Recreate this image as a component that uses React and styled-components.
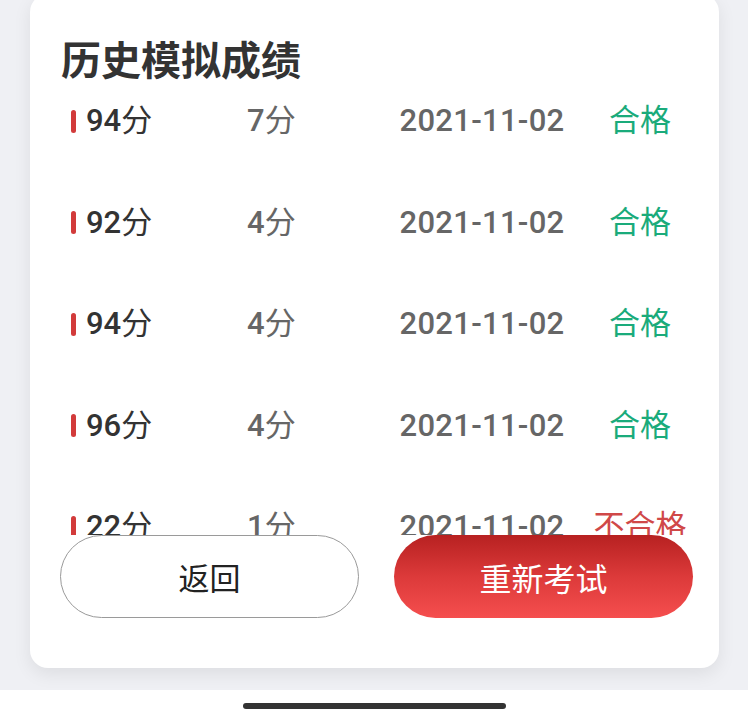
import React from 'react';
import styled, { createGlobalStyle } from 'styled-components';

const GlobalStyle = createGlobalStyle`
  html, body {
    margin: 0;
    padding: 0;
    background: #fff;
  }
  body {
    font-family: Roboto, "Noto Sans CJK SC", sans-serif;
  }
`;

const records = [
  { score: 94, used: 7, date: '2021-11-02', passed: true },
  { score: 92, used: 4, date: '2021-11-02', passed: true },
  { score: 94, used: 4, date: '2021-11-02', passed: true },
  { score: 96, used: 4, date: '2021-11-02', passed: true },
  { score: 22, used: 1, date: '2021-11-02', passed: false },
];

function App() {
  return (
    <>
      <GlobalStyle />
      <Screen>
        <Backdrop>
          <Card>
            <Title>历史模拟成绩</Title>
            <List>
              {records.map((r, i) => (
                <Row key={i}>
                  <ScoreCell>
                    <Marker />
                    <Score><Num>{r.score}</Num>分</Score>
                  </ScoreCell>
                  <Used><Num>{r.used}</Num>分</Used>
                  <DateCell>{r.date}</DateCell>
                  <Status $passed={r.passed}>{r.passed ? '合格' : '不合格'}</Status>
                </Row>
              ))}
            </List>
            <Actions>
              <BackButton>返回</BackButton>
              <RetryButton>重新考试</RetryButton>
            </Actions>
          </Card>
        </Backdrop>
        <HomeBar>
          <Indicator />
        </HomeBar>
      </Screen>
    </>
  );
}

export default App;

const Screen = styled.div`
  width: 748px;
  height: 720px;
  overflow: hidden;
  display: flex;
  flex-direction: column;
`;

const Backdrop = styled.div`
  height: 690px;
  background: #eff0f4;
  padding: 0 29px 0 30px;
  box-sizing: border-box;
`;

const Card = styled.div`
  margin-top: -6px;
  height: 674px;
  box-sizing: border-box;
  background: #fff;
  border-radius: 18px;
  box-shadow: 0 6px 18px rgba(0, 0, 0, 0.08);
  padding: 40px 0 0;
  display: flex;
  flex-direction: column;
`;

const Title = styled.h2`
  margin: 0 0 0 31px;
  font-family: "Noto Sans CJK SC", sans-serif;
  font-size: 40px;
  font-weight: 700;
  line-height: 48px;
  color: #333;
`;

const List = styled.div`
  margin-top: 17px;
  height: 436px;
  overflow: hidden;
  display: flex;
  flex-direction: column;
  gap: 57.5px;
`;

const Row = styled.div`
  flex: none;
  display: grid;
  grid-template-columns: 176px 133px 204px 112px;
  align-items: center;
  height: 44px;
  padding-left: 41px;
  font-size: 31px;
  line-height: 44px;
`;

const ScoreCell = styled.div`
  display: flex;
  align-items: center;
  gap: 10px;
`;

const Marker = styled.span`
  width: 5px;
  height: 23px;
  border-radius: 3px;
  background: #d23b3b;
`;

const Num = styled.span`
  font-weight: 500;
`;

const Score = styled.span`
  color: #333;
`;

const Used = styled.span`
  color: #666;
`;

const DateCell = styled.span`
  color: #666;
  font-weight: 500;
  letter-spacing: 0.3px;
  text-align: center;
`;

const Status = styled.span`
  text-align: center;
  color: ${p => (p.$passed ? '#1aab7b' : '#d04848')};
`;

const Actions = styled.div`
  display: grid;
  grid-template-columns: 299px 299px;
  gap: 35px;
  padding-left: 30px;
`;

const PillButton = styled.button`
  height: 83px;
  border-radius: 42px;
  font-family: "Noto Sans CJK SC", sans-serif;
  font-size: 31px;
  cursor: pointer;
`;

const BackButton = styled(PillButton)`
  background: #fff;
  border: 1.5px solid #9a9a9a;
  color: #222;
`;

const RetryButton = styled(PillButton)`
  border: none;
  color: #fff;
  font-size: 32px;
  background: linear-gradient(180deg, #b72121 0%, #dc3a3a 50%, #f54e4e 100%);
`;

const HomeBar = styled.div`
  flex: 1;
  background: #fff;
  display: flex;
  justify-content: center;
  padding-top: 13px;
`;

const Indicator = styled.div`
  width: 263px;
  height: 6px;
  border-radius: 3px;
  background: #333;
`;
